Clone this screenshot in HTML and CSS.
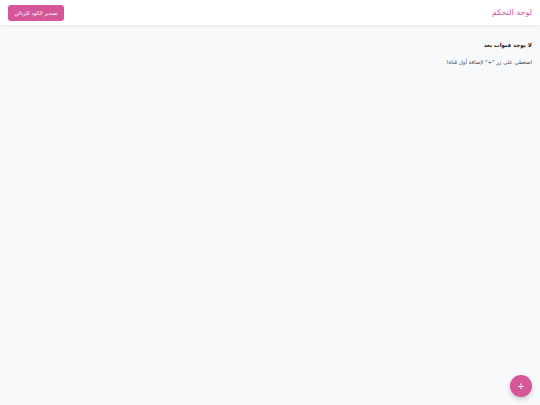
FILE: index.html
```html
<!DOCTYPE html>
<html lang="ar" dir="rtl">
  <head>
    <meta charset="utf-8">
    <title>لوحة التحكم</title>
    <link rel="stylesheet" href="styles.css">
  </head>
  <body>
    <header class="topbar">
      <h1 class="title">لوحة التحكم</h1>
      <button class="export-btn">تصدير الكود للزبائن</button>
    </header>
    <main class="content">
      <h2 class="empty-title">لا يوجد قنوات بعد</h2>
      <p class="empty-text">اضغطي على زر "+" لإضافة أول قناة!</p>
    </main>
    <button class="fab">+</button>
  </body>
</html>
```

FILE: styles.css
```css
body {
  margin: 0;
  font-family: "DejaVu Sans", sans-serif;
  background-color: #f8f9fb;
  height: 405px;
}
.topbar {
  display: flex;
  justify-content: space-between;
  align-items: center;
  height: 25px;
  padding: 0 8px;
  background-color: #fff;
  box-shadow: 0 1px 4px rgba(0, 0, 0, 0.08);
}
.title {
  margin: 0;
  color: #d6569a;
  font-size: 8px;
  font-weight: normal;
}
.export-btn {
  height: 16px;
  padding: 0 6.5px;
  background-color: #d6569a;
  color: #fff;
  border: none;
  border-radius: 3px;
  font-family: "DejaVu Sans", sans-serif;
  font-size: 5.4px;
  cursor: pointer;
}
.content {
  padding: 17px 8px;
}
.empty-title {
  margin: 0;
  color: #222;
  font-size: 5.6px;
  font-weight: bold;
}
.empty-text {
  margin: 11px 0 0;
  color: #444;
  font-size: 5.4px;
}
.fab {
  position: fixed;
  left: 510px;
  top: 375px;
  width: 22px;
  height: 22px;
  border-radius: 50%;
  border: none;
  background-color: #d6569a;
  color: #fff;
  font-size: 11px;
  line-height: 22px;
  padding: 0;
  box-shadow: 0 2px 5px rgba(0, 0, 0, 0.2);
  cursor: pointer;
}
```
